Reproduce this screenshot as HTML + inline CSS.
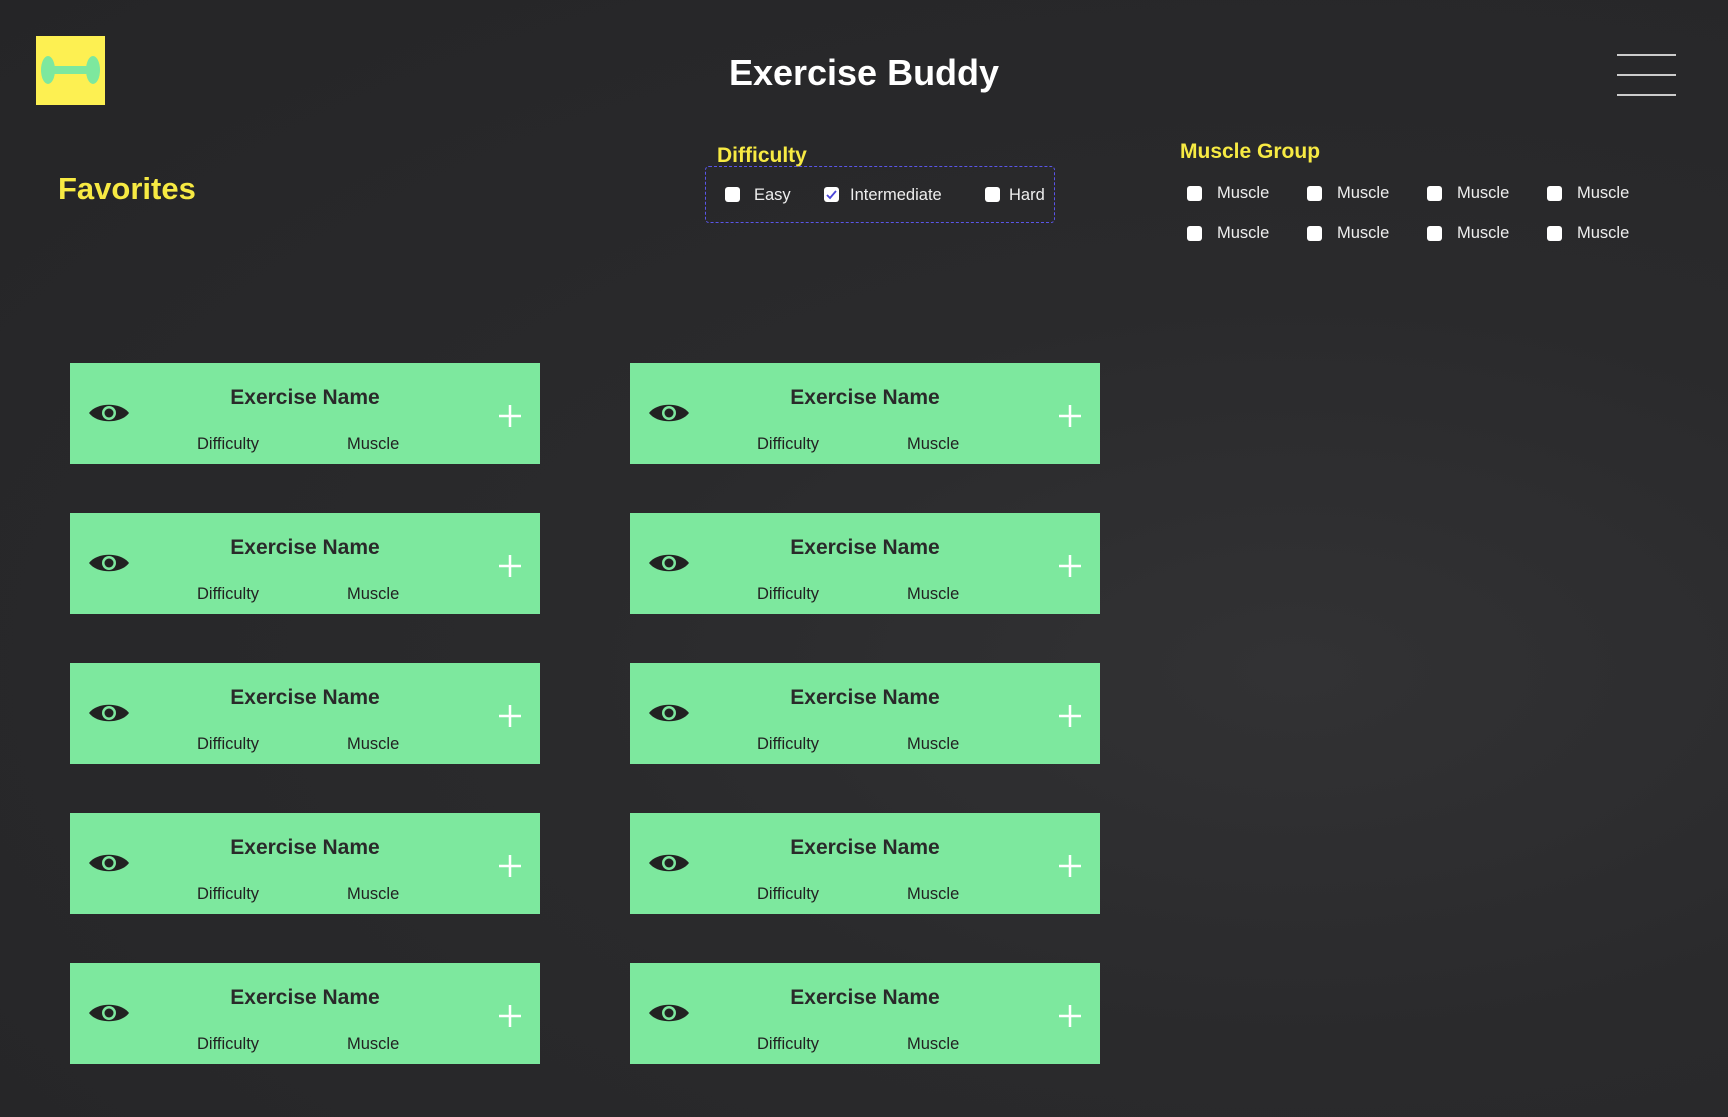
<!DOCTYPE html>
<html><head><meta charset="utf-8">
<style>
*{margin:0;padding:0;box-sizing:border-box}
body{width:1728px;height:1117px;overflow:hidden;font-family:"Liberation Sans",sans-serif;
background:radial-gradient(ellipse at 75% 60%,#323234 0%,#2a2a2c 40%,#252527 100%);position:relative;color:#fff}
.abs{position:absolute}
.logo{left:36px;top:36px;width:69px;height:69px;background:#fdf052}
.title{left:0;width:1728px;top:52px;text-align:center;font-size:36px;font-weight:bold;color:#fff}
.ham{left:1617px;width:59px;height:1.5px;background:#ccc}
.yl{color:#f7ea43;font-weight:bold}
.cb{width:15px;height:15px;background:#fff;border-radius:3px}
.lbl{font-size:16.5px;color:#eee}
.box{left:705px;top:166px;width:350px;height:57px;border:1.5px dashed #5a55e8;border-radius:4px}
.card{width:470px;height:101px;background:#7de89e;color:#222}
.card .n{position:absolute;left:0;width:470px;top:23px;text-align:center;font-size:21px;font-weight:bold;color:#2a2a2a}
.card .d{position:absolute;top:72px;font-size:16.5px}
.card svg{position:absolute}
</style></head><body>
<div class="abs logo"><svg width="69" height="69"><ellipse cx="12" cy="34" rx="7" ry="14" fill="#7de89e"/><ellipse cx="57" cy="34" rx="7" ry="14" fill="#7de89e"/><rect x="12" y="30" width="45" height="8" fill="#7de89e"/></svg></div>
<div class="abs title">Exercise Buddy</div>
<div class="abs ham" style="top:54px"></div><div class="abs ham" style="top:74px"></div><div class="abs ham" style="top:94px"></div>
<div class="abs yl" style="left:58px;top:171px;font-size:31px">Favorites</div>
<div class="abs yl" style="left:717px;top:144px;font-size:21px">Difficulty</div>
<div class="abs box"></div>
<div class="abs cb" style="left:725px;top:187px"></div><div class="abs lbl" style="left:754px;top:186px">Easy</div>
<div class="abs cb" style="left:824px;top:187px"><svg width="15" height="15"><path d="M3 8l3 3 6-7" stroke="#4a45d8" stroke-width="1.8" fill="none"/></svg></div><div class="abs lbl" style="left:850px;top:186px">Intermediate</div>
<div class="abs cb" style="left:985px;top:187px"></div><div class="abs lbl" style="left:1009px;top:186px">Hard</div>
<div class="abs yl" style="left:1180px;top:140px;font-size:21px">Muscle Group</div>
<div id="mg"></div>
<div id="cards"></div>
<script>
var h='';
[186,226].forEach(function(y){[1187,1307,1427,1547].forEach(function(x){
h+='<div class="abs cb" style="left:'+x+'px;top:'+y+'px"></div><div class="abs lbl" style="left:'+(x+30)+'px;top:'+(y-2)+'px">Muscle</div>';});});
document.getElementById('mg').innerHTML=h;
var c='';
[363,513,663,813,963].forEach(function(y){[70,630].forEach(function(x){
c+='<div class="abs card" style="left:'+x+'px;top:'+y+'px"><div class="n">Exercise Name</div><div class="d" style="left:127px">Difficulty</div><div class="d" style="left:277px">Muscle</div>'+
'<svg style="left:18px;top:37px" width="42" height="26" viewBox="0 0 42 26"><path d="M1 13C9 2 33 2 41 13C33 24 9 24 1 13Z" fill="#222"/><circle cx="21" cy="13" r="7" fill="#7de89e"/><circle cx="21" cy="13" r="4.5" fill="#222"/></svg>'+
'<svg style="left:428px;top:41px" width="24" height="24"><path d="M12 1v22M1 12h22" stroke="#fff" stroke-width="2.5"/></svg></div>';});});
document.getElementById('cards').innerHTML=c;
</script>
</body></html>
